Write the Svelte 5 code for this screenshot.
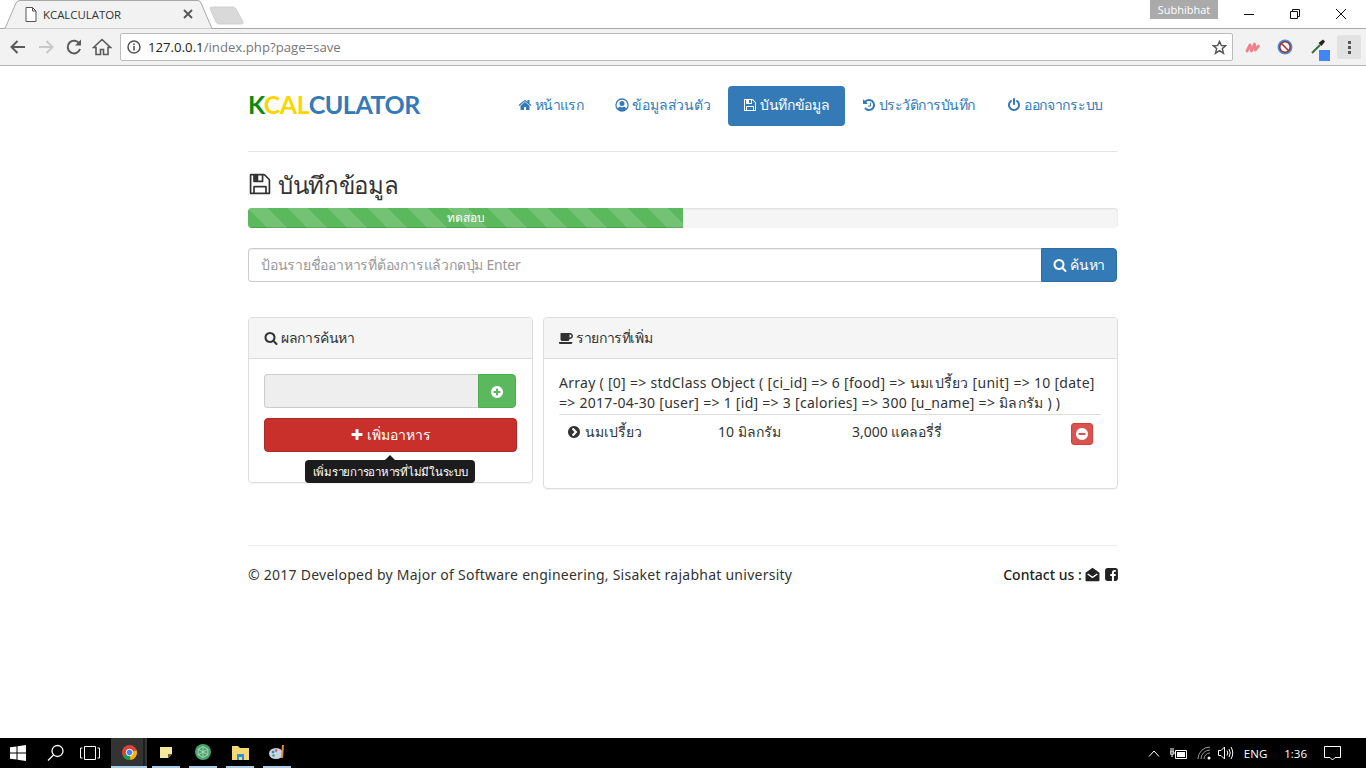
<script>
  const circle = "q0 209-103 385.500t-279.500 279.500-385.500 103-385.500-103-279.500-279.500-103-385.500 103-385.500 279.500-279.500 385.500-103 385.500 103 279.500 279.500 103 385.500z";
  const paths = {
    home: "M1472 992v480q0 26-19 45t-45 19h-384v-384h-256v384h-384q-26 0-45-19t-19-45v-480q0-1 .5-3t.5-3l575-474 575 474q1 2 1 6zm223-69l-62 74q-8 9-21 11h-3q-13 0-21-7l-692-577-692 577q-12 8-24 7-13-2-21-11l-62-74q-8-10-7-23.500t11-21.500l719-599q32-26 76-26t76 26l244 204v-195q0-14 9-23t23-9h192q14 0 23 9t9 23v408l219 182q10 8 11 21.500t-7 23.500z",
    search: "M1216 832q0-185-131.500-316.500t-316.500-131.500-316.500 131.500-131.500 316.500 131.500 316.500 316.500 131.500 316.500-131.500 131.500-316.500zm512 832q0 52-38 90t-90 38q-54 0-90-38l-343-342q-179 124-399 124-143 0-273.500-55.500t-225-150-150-225-55.500-273.500 55.500-273.500 150-225 225-150 273.500-55.500 273.500 55.500 225 150 150 225 55.500 273.500q0 220-124 399l343 343q37 37 37 90z",
    plus: "M1600 736v192q0 40-28 68t-68 28h-416v416q0 40-28 68t-68 28h-192q-40 0-68-28t-28-68v-416h-416q-40 0-68-28t-28-68v-192q0-40 28-68t68-28h416v-416q0-40 28-68t68-28h192q40 0 68 28t28 68v416h416q40 0 68 28t28 68z",
    power: "M1664 896q0 156-61 298t-164 245-245 164-298 61-298-61-245-164-164-245-61-298q0-182 80.500-343t226.500-270q43-32 95.500-25t83.500 50q32 42 24.500 94.500t-49.500 84.500q-98 74-151.500 181t-53.500 228q0 104 40.500 198.500t109.500 163.500 163.500 109.500 198.500 40.500 198.500-40.500 163.500-109.500 109.500-163.500 40.500-198.500q0-121-53.500-228t-151.500-181q-42-32-49.500-84.500t24.500-94.500q31-43 84-50t95 25q146 109 226.500 270t80.500 343zm-640-768v640q0 52-38 90t-90 38-90-38-38-90v-640q0-52 38-90t90-38 90 38 38 90z",
    save: "M512 1536h768v-384h-768v384zm896 0h128v-896q0-14-10-38.500t-20-34.500l-281-281q-10-10-34-20t-39-10v416q0 40-28 68t-68 28h-576q-40 0-68-28t-28-68v-416h-128v1280h128v-416q0-40 28-68t68-28h832q40 0 68 28t28 68v416zm-384-928v-320q0-13-9.500-22.500t-22.500-9.500h-192q-13 0-22.500 9.500t-9.500 22.500v320q0 13 9.500 22.500t22.500 9.500h192q13 0 22.500-9.500t9.500-22.500zm640 32v928q0 40-28 68t-68 28h-1344q-40 0-68-28t-28-68v-1344q0-40 28-68t68-28h928q40 0 88 20t76 48l280 280q28 28 48 76t20 88z",
    history: "M1664 896q0 156-61 298t-164 245-245 164-298 61q-172 0-327-72.500t-264-204.500q-7-10-6.500-22.500t8.500-20.500l137-138q10-9 25-9 16 2 23 12 73 95 179 147t225 52q104 0 198.500-40.500t163.500-109.500 109.500-163.500 40.500-198.500-40.500-198.500-109.500-163.500-163.500-109.500-198.500-40.500q-98 0-188 35.500t-160 101.500l137 138q31 30 14 69-17 40-59 40h-448q-26 0-45-19t-19-45v-448q0-42 40-59 39-17 69 14l130 129q107-101 244.500-156.500t284.500-55.500q156 0 298 61t245 164 164 245 61 298zm-512-288v448q0 14-9 23t-23 9h-320q-14 0-23-9t-9-23v-64q0-14 9-23t23-9h224v-352q0-14 9-23t23-9h64q14 0 23 9t9 23z",
    pluscircle: "M1344 960v-128q0-26-19-45t-45-19h-256v-256q0-26-19-45t-45-19h-128q-26 0-45 19t-19 45v256h-256q-26 0-45 19t-19 45v128q0 26 19 45t45 19h256v256q0 26 19 45t45 19h128q26 0 45-19t19-45v-256h256q26 0 45-19t19-45zM1664 896" + circle,
    minuscircle: "M1344 960v-128q0-26-19-45t-45-19h-768q-26 0-45 19t-19 45v128q0 26 19 45t45 19h768q26 0 45-19t19-45zM1664 896" + circle,
    chevron: "M845 1395l454-454q19-19 19-45t-19-45l-454-454q-19-19-45-19t-45 19l-102 102q-19 19-19 45t19 45l307 307-307 307q-19 19-19 45t19 45l102 102q19 19 45 19t45-19zM1664 896" + circle,
    coffee: "M1600 640q0-80-56-136t-136-56h-64v384h64q80 0 136-56t56-136zm-1664 768h1792q0 106-75 181t-181 75h-1280q-106 0-181-75t-75-181zm1856-768q0 159-112.500 271.500t-271.500 112.500h-64v32q0 92-66 158t-158 66h-704q-92 0-158-66t-66-158v-736q0-26 19-45t45-19h1152q159 0 271.500 112.500t112.500 271.500z",
    facebook: "M1376 128q119 0 203.500 84.500t84.500 203.500v960q0 119-84.500 203.500t-203.500 84.500h-188v-595h199l30-232h-229v-148q0-56 23.500-84t91.500-28l122-1v-207q-63-9-178-9-136 0-217.500 80t-81.500 226v171h-200v232h200v595h-532q-119 0-203.500-84.500t-84.500-203.500v-960q0-119 84.500-203.500t203.500-84.500h960z",
    user: "M896 40a856 856 0 1 0 0 1712 856 856 0 0 0 0-1712zm0 170a686 686 0 0 1 530 1122c-70-150-190-220-300-220-70 45-145 70-230 70s-160-25-230-70c-110 0-230 70-300 220a686 686 0 0 1 530-1122zm0 160a320 320 0 1 0 0 640 320 320 0 0 0 0-640z",
    envelope: "M896 96L64 700v900q0 96 96 96h1472q96 0 96-96V700zM896 1130L370 770l-100 140 626 430 626-430-100-140z",
  };

  const nav = [
    { icon: "home", label: "หน้าแรก", spacing: -0.7 },
    { icon: "user", label: "ข้อมูลส่วนตัว", spacing: -0.2 },
    { icon: "save", label: "บันทึกข้อมูล", spacing: -0.3, active: true },
    { icon: "history", label: "ประวัติการบันทึก", spacing: -0.5 },
    { icon: "power", label: "ออกจากระบบ", spacing: -0.3 },
  ];
</script>

{#snippet fa(name, size)}
  <svg class="fa" width={size} height={size} viewBox="0 0 1792 1792" aria-hidden="true"><path fill="currentColor" fill-rule="evenodd" d={paths[name]} /></svg>
{/snippet}

<div class="screen">
  <div class="tabstrip">
    <svg class="tabshape" width="250" height="29" viewBox="0 0 250 29">
      <path d="M0 28.500H5L16 3Q17 .5 20 .5H198Q200 .5 201 3L212 28.500" fill="#f2f2f2" stroke="#a8a8a8" />
      <path d="M210 8.500Q210 7 212 7H233Q235 7 236 9L243 22Q243.500 24 241 24H219Q217 24 216 22Z" fill="#d9d9d9" stroke="#cfcfcf" />
    </svg>
    <div class="tab">
      <svg width="12" height="15" viewBox="0 0 12 15"><path d="M1 .5H7.500L11 4V14.500H1ZM7.500 .5V4H11" fill="#fff" stroke="#555" /></svg>
      <span class="tabtitle">KCALCULATOR</span>
      <svg class="tabx" width="10" height="10" viewBox="0 0 10 10"><path d="M1 1L9 9M9 1L1 9" stroke="#555" stroke-width="1.800" /></svg>
    </div>
    <span class="profile">Subhibhat</span>
    <div class="winbtns">
      <svg width="12" height="12" viewBox="0 0 12 12"><path d="M1 6.500H11" stroke="#111" /></svg>
      <svg width="12" height="12" viewBox="0 0 12 12"><path d="M1.500 3.500H8.500V10.500H1.500ZM3.500 3.500V1.500H10.500V8.500H8.500" fill="none" stroke="#111" /></svg>
      <svg width="12" height="12" viewBox="0 0 12 12"><path d="M1 1L11 11M11 1L1 11" stroke="#111" /></svg>
    </div>
  </div>

  <div class="toolbar">
    <svg class="tb" width="20" height="20" viewBox="0 0 20 20"><path d="M17 10H4M9.500 4L3.500 10L9.500 16" fill="none" stroke="#5a5a5a" stroke-width="2" /></svg>
    <svg class="tb" width="20" height="20" viewBox="0 0 20 20"><path d="M3 10H16M10.500 4L16.500 10L10.500 16" fill="none" stroke="#c8c8c8" stroke-width="2" /></svg>
    <svg class="tb" width="20" height="20" viewBox="0 0 20 20"><path d="M15.500 7A6.300 6.300 0 1 0 16 12" fill="none" stroke="#5a5a5a" stroke-width="2" /><path d="M17 2.500V8.500H11Z" fill="#5a5a5a" /></svg>
    <svg class="tb" width="20" height="20" viewBox="0 0 20 20"><path d="M1.500 10.500L10 2.500L18.500 10.500H16V17.500H11.500V12.500H8.500V17.500H4V10.500Z" fill="none" stroke="#5a5a5a" stroke-width="1.600" /></svg>
    <div class="omnibox">
      <svg width="14" height="14" viewBox="0 0 14 14"><circle cx="7" cy="7" r="6" fill="none" stroke="#555" stroke-width="1.500" /><path d="M7 6V10.500M7 3.500V5" stroke="#555" stroke-width="1.600" /></svg>
      <span class="url"><b>127.0.0.1</b>/index.php?page=save</span>
      <svg class="star" width="15" height="15" viewBox="0 0 16 16"><path d="M8 1.500L10 6H14.800L11 9.200L12.300 14.200L8 11.400L3.700 14.200L5 9.200L1.200 6H6Z" fill="none" stroke="#555" stroke-width="1.500" /></svg>
    </div>
    <div class="exts">
      <svg width="16" height="16" viewBox="0 0 16 16"><path d="M2 12L5 6L6.500 12L9.500 5L10.500 11L13.500 7" fill="none" stroke="#f0808a" stroke-width="2.800" stroke-linecap="round" stroke-linejoin="round" /></svg>
      <svg width="16" height="16" viewBox="0 0 16 16"><circle cx="8" cy="8" r="7.500" fill="#4a90d9" /><circle cx="8" cy="8" r="5.200" fill="#fff" stroke="#9c2b2b" stroke-width="1.500" /><path d="M4.500 4.500L11.500 11.500" stroke="#9c2b2b" stroke-width="1.500" /></svg>
      <svg class="dropper" width="20" height="24" viewBox="0 0 20 24"><path d="M1 16L9 8" stroke="#3c6b3c" stroke-width="2" /><path d="M7.500 6L12 2.500L14 4.500L10.500 9Z" fill="#222" /><rect x="8" y="13" width="11" height="11" fill="#4285f4" /></svg>
      <div class="menu"><i></i><i></i><i></i></div>
    </div>
  </div>

  <main class="page">
    <div class="wrap">
      <header class="head">
        <div class="logo"><span class="k">K</span><span class="cal">CAL</span>CULATOR</div>
        <nav class="nav">
          {#each nav as item}
            <a class="pill" class:active={item.active} href="#top" style="letter-spacing: {item.spacing}px">{@render fa(item.icon, 14)} {item.label}</a>
          {/each}
        </nav>
      </header>

      <h3 class="title">{@render fa("save", 24)} บันทึกข้อมูล</h3>

      <div class="progress"><div class="bar" style="width: 50%">ทดสอบ</div></div>

      <div class="searchgroup">
        <input class="search" placeholder="ป้อนรายชื่ออาหารที่ต้องการแล้วกดปุ่ม Enter" />
        <button class="btn primary">{@render fa("search", 14)} ค้นหา</button>
      </div>

      <div class="panels">
        <section class="panel left">
          <div class="panel-head">{@render fa("search", 14)} ผลการค้นหา</div>
          <div class="panel-body">
            <div class="addgroup">
              <div class="readonly"></div>
              <button class="btn success">{@render fa("pluscircle", 14)}</button>
            </div>
            <button class="btn danger">{@render fa("plus", 14)} เพิ่มอาหาร</button>
            <div class="tooltip">เพิ่มรายการอาหารที่ไม่มีในระบบ</div>
          </div>
        </section>

        <section class="panel right">
          <div class="panel-head">{@render fa("coffee", 14)} รายการที่เพิ่ม</div>
          <div class="panel-body">
            <div class="dump">Array ( [0] =&gt; stdClass Object ( [ci_id] =&gt; 6 [food] =&gt; นมเปรี้ยว [unit] =&gt; 10 [date] =&gt; 2017-04-30 [user] =&gt; 1 [id] =&gt; 3 [calories] =&gt; 300 [u_name] =&gt; มิลกรัม ) )</div>
            <div class="row">
              <span class="c1">{@render fa("chevron", 14)} นมเปรี้ยว</span>
              <span class="c2">10 มิลกรัม</span>
              <span class="c3">3,000 แคลอรี่รี่</span>
              <button class="btn remove">{@render fa("minuscircle", 14)}</button>
            </div>
          </div>
        </section>
      </div>

      <footer class="foot">
        <span>© 2017 Developed by Major of Software engineering, Sisaket rajabhat university</span>
        <span class="contact">Contact us : {@render fa("envelope", 15)} {@render fa("facebook", 15)}</span>
      </footer>
    </div>
  </main>

  <div class="taskbar">
    <svg class="start" width="16" height="16" viewBox="0 0 16 16"><path d="M0 2.300L6.500 1.400V7.500H0ZM7.500 1.200L16 0V7.500H7.500ZM0 8.500H6.500V14.600L0 13.700ZM7.500 8.500H16V16L7.500 14.800Z" fill="#fff" /></svg>
    <svg class="cortana" width="18" height="18" viewBox="0 0 18 18"><circle cx="10.500" cy="7" r="5.500" fill="none" stroke="#fff" stroke-width="1.300" /><path d="M6.500 11L1 16.500" stroke="#fff" stroke-width="1.300" /></svg>
    <svg class="taskview" width="20" height="14" viewBox="0 0 20 14"><path d="M4.500 .5H15.500V13.500H4.500ZM2.500 2H.5V12H2.500M17.500 2H19.500V12H17.500" fill="none" stroke="#fff" /></svg>
    <div class="app running">
      <svg width="15" height="15" viewBox="0 0 16 16"><circle cx="8" cy="8" r="8" fill="#db4437" /><path d="M8 8L1 12A8 8 0 0 0 9 16Z" fill="#0f9d58" /><path d="M8 8L15.500 5.500A8 8 0 0 1 9 16Z" fill="#f4b400" /><circle cx="8" cy="8" r="3.500" fill="#4285f4" stroke="#fff" /></svg>
    </div>
    <div class="app">
      <svg width="13" height="13" viewBox="0 0 13 13"><path d="M0 1H12V8L8 12H0Z" fill="#f2e8a0" /><path d="M12 8H8V12Z" fill="#6b5f3a" /></svg>
    </div>
    <div class="app">
      <svg width="16" height="16" viewBox="0 0 16 16"><circle cx="8" cy="8" r="8" fill="#4ba36d" /><path d="M8 2.500L12.800 5.200V10.800L8 13.500L3.200 10.800V5.200ZM3.200 5.200L12.800 10.800M12.800 5.200L3.200 10.800M8 2.500V13.500" fill="none" stroke="#b8e0c4" stroke-width=".8" /></svg>
    </div>
    <div class="app">
      <svg width="17" height="15" viewBox="0 0 17 15"><path d="M0 1H6L8 3H17V15H0Z" fill="#f3d775" /><path d="M5 9H12V15H10V12H7V15H5Z" fill="#2f8fd6" /></svg>
    </div>
    <div class="app">
      <svg width="17" height="16" viewBox="0 0 17 16"><ellipse cx="7" cy="9.500" rx="7" ry="5.500" fill="#c6d7e3" /><circle cx="4" cy="8" r="1.300" fill="#2f7fd6" /><circle cx="7" cy="6.500" r="1.300" fill="#d9534f" /><circle cx="4.500" cy="11.500" r="1.300" fill="#4ba36d" /><path d="M14 1L13 14" stroke="#e98a2b" stroke-width="2" /></svg>
    </div>
    <div class="tray">
      <svg width="12" height="7" viewBox="0 0 12 7"><path d="M1 6.500L6 1L11 6.500" fill="none" stroke="#fff" /></svg>
      <svg class="battery" width="17" height="11" viewBox="0 0 17 11"><path d="M5.500 2.500H16.500V10.500H5.500Z" fill="none" stroke="#fff" /><rect x="7" y="4" width="8" height="5" fill="#fff" /><path d="M1 0V4M3 0V4M0 4H4V6H0ZM2 6V9" stroke="#fff" /></svg>
      <svg class="wifi" width="15" height="14" viewBox="0 0 15 14"><path d="M1 13A12 12 0 0 1 13 1M4 13A9 9 0 0 1 13 4M7 13A6 6 0 0 1 13 7" fill="none" stroke="#999" /><circle cx="12" cy="12" r="1.500" fill="#fff" /></svg>
      <svg class="speaker" width="16" height="14" viewBox="0 0 16 14"><path d="M.5 4.500H3L6.500 1V13L3 9.500H.5ZM9 4.500Q10.500 7 9 9.500M11 3Q13.500 7 11 11M13 1Q16.500 7 13 13" fill="none" stroke="#fff" /></svg>
      <span class="lang">ENG</span>
      <span class="clock">1:36</span>
      <svg class="notify" width="17" height="15" viewBox="0 0 17 15"><path d="M.5 .5H16.500V11.500H11L8.500 14L6 11.500H.5Z" fill="none" stroke="#fff" /></svg>
    </div>
  </div>
</div>

<style>
  :global(body) {
    background: #fff;
    overflow: hidden;
  }
  .screen {
    display: flex;
    flex-direction: column;
    height: 768px;
    width: 1366px;
    font-family: "Noto Sans", "Lato", sans-serif;
    font-size: 14px;
    color: #333;
  }
  .fa {
    vertical-align: -2px;
  }

  /* chrome */
  .tabstrip {
    position: relative;
    display: flex;
    align-items: flex-start;
    height: 29px;
    border-bottom: 1px solid #a8a8a8;
    box-sizing: border-box;
  }
  .tabshape {
    position: absolute;
    left: 0;
    top: 0;
  }
  .tab {
    position: relative;
    display: flex;
    align-items: center;
    width: 168px;
    height: 28px;
    margin-left: 25px;
    gap: 6px;
  }
  .tabtitle {
    font-family: "Open Sans", sans-serif;
    font-size: 11.400px;
    color: #333;
    flex: 1;
  }
  .profile {
    margin-left: auto;
    width: 68px;
    height: 19px;
    line-height: 19px;
    background: #aaa;
    color: #fff;
    font-family: "Open Sans", sans-serif;
    font-size: 11px;
    text-align: center;
  }
  .winbtns {
    display: flex;
    align-items: center;
    height: 27px;
    gap: 34px;
    margin: 0 19px 0 25px;
  }
  .toolbar {
    display: flex;
    align-items: center;
    height: 37px;
    box-sizing: border-box;
    background: #f2f2f2;
    border-bottom: 1px solid #b4b4b4;
    padding-left: 8px;
  }
  .tb {
    margin-right: 8px;
  }
  .omnibox {
    display: flex;
    align-items: center;
    gap: 7px;
    width: 1113px;
    height: 28px;
    box-sizing: border-box;
    padding: 0 5px 0 6px;
    background: #fff;
    border: 1px solid #bbb;
    border-radius: 2px;
  }
  .url {
    flex: 1;
    font-family: "Open Sans", sans-serif;
    font-size: 13.200px;
    color: #777;
  }
  .url b {
    font-weight: 400;
    color: #222;
  }
  .exts {
    display: flex;
    align-items: center;
    gap: 16px;
    margin-left: 12px;
  }
  .dropper {
    margin: 4px 0 0 2px;
  }
  .menu {
    display: flex;
    flex-direction: column;
    align-items: center;
    justify-content: center;
    gap: 2px;
    width: 24px;
    height: 24px;
    margin-left: -10px;
    background: #e2e2e2;
    border-radius: 2px;
  }
  .menu i {
    width: 3px;
    height: 3px;
    background: #555;
  }

  /* page */
  .page {
    flex: 1;
  }
  .wrap {
    width: 870px;
    margin: 0 auto;
  }
  .head {
    display: flex;
    align-items: center;
    justify-content: space-between;
    height: 65px;
    padding-top: 20px;
    border-bottom: 1px solid #e5e5e5;
  }
  .logo {
    font-family: "Lato", sans-serif;
    font-size: 25px;
    font-weight: 700;
    color: #337ab7;
    letter-spacing: -.45px;
    margin-bottom: 29px;
  }
  .k {
    color: #0a8a0a;
  }
  .cal {
    color: #ffd500;
  }
  .nav {
    display: flex;
    gap: 2px;
    margin-bottom: 25px;
  }
  .pill {
    display: block;
    height: 40px;
    line-height: 38px;
    padding: 0 15px;
    border-radius: 4px;
    color: #337ab7;
    text-decoration: none;
    white-space: nowrap;
  }
  .pill.active {
    background: #337ab7;
    color: #fff;
  }
  .title {
    margin: 18px 0 9px;
    font-size: 24px;
    font-weight: 400;
    line-height: 29px;
    color: #333;
    letter-spacing: -.3px;
  }
  .progress {
    height: 20px;
    background: #f5f5f5;
    border-radius: 4px;
    overflow: hidden;
    box-shadow: inset 0 1px 2px rgba(0, 0, 0, .1);
  }
  .bar {
    height: 20px;
    line-height: 20px;
    background-color: #5cb85c;
    background-image: linear-gradient(45deg, rgba(255, 255, 255, .15) 25%, transparent 25%, transparent 50%, rgba(255, 255, 255, .15) 50%, rgba(255, 255, 255, .15) 75%, transparent 75%, transparent);
    background-size: 40px 40px;
    box-shadow: inset 0 -1px 0 rgba(0, 0, 0, .15);
    color: #fff;
    font-size: 12px;
    font-weight: 500;
    text-align: center;
  }
  .searchgroup {
    display: flex;
    margin: 20px 1px 0 0;
  }
  .search {
    flex: 1;
    height: 34px;
    box-sizing: border-box;
    padding: 5px 12px 7px;
    border: 1px solid #ccc;
    border-right: 0;
    border-radius: 4px 0 0 4px;
    font: inherit;
    letter-spacing: -.22px;
    outline: none;
    box-shadow: inset 0 1px 1px rgba(0, 0, 0, .075);
  }
  .search::placeholder {
    color: #999;
  }
  .btn {
    height: 34px;
    border: 1px solid transparent;
    border-radius: 4px;
    color: #fff;
    font: inherit;
    padding: 0;
  }
  .primary {
    width: 76px;
    background: #337ab7;
    border-color: #2e6da4;
    border-radius: 0 4px 4px 0;
    letter-spacing: -.3px;
  }
  .panels {
    display: grid;
    grid-template-columns: 285px 575px;
    gap: 10px;
    align-items: start;
    margin-top: 35px;
  }
  .panel {
    border: 1px solid #ddd;
    border-radius: 4px;
    box-shadow: 0 1px 1px rgba(0, 0, 0, .05);
  }
  .panel-head {
    height: 40px;
    line-height: 40px;
    padding: 0 15px;
    background: #f5f5f5;
    border-bottom: 1px solid #ddd;
    border-radius: 3px 3px 0 0;
    font-weight: 500;
    letter-spacing: -.4px;
  }
  .panel-body {
    padding: 15px;
  }
  .left .panel-body {
    position: relative;
    height: 93px;
  }
  .addgroup {
    display: flex;
    margin-right: 1px;
  }
  .readonly {
    flex: 1;
    height: 34px;
    box-sizing: border-box;
    background: #eee;
    border: 1px solid #ccc;
    border-right: 0;
    border-radius: 4px 0 0 4px;
  }
  .success {
    width: 38px;
    background: #5cb85c;
    border-color: #4cae4c;
    border-radius: 0 4px 4px 0;
  }
  .danger {
    display: block;
    width: 253px;
    margin-top: 10px;
    background: #c9302c;
    border-color: #ac2925;
  }
  .tooltip {
    position: absolute;
    left: 56px;
    top: 101px;
    width: 170px;
    height: 23px;
    line-height: 23px;
    background: #1c1c1c;
    border-radius: 4px;
    color: #fff;
    font-size: 11.500px;
    letter-spacing: -.25px;
    text-align: center;
    white-space: nowrap;
  }
  .tooltip::before {
    content: "";
    position: absolute;
    left: 80px;
    top: -5px;
    border: solid transparent;
    border-width: 0 5px 5px;
    border-bottom-color: #1c1c1c;
  }
  .right .panel-body {
    padding: 14px 16px 38px 15px;
  }
  .dump {
    line-height: 20px;
    padding-bottom: 1px;
    border-bottom: 1px solid #ddd;
    letter-spacing: .28px;
  }
  .row {
    display: grid;
    grid-template-columns: 151px 134px 1fr 22px;
    align-items: start;
    padding: 7px 8px 0;
    height: 28px;
    line-height: 20px;
  }
  .remove {
    width: 22px;
    height: 22px;
    margin-top: 1px;
    background: #d9534f;
    border-color: #d43f3a;
    border-radius: 3px;
  }
  .foot {
    display: flex;
    justify-content: space-between;
    margin-top: 56px;
    padding-top: 19px;
    border-top: 1px solid #eee;
    line-height: 20px;
    letter-spacing: .25px;
  }
  .contact {
    margin-right: -1px;
    color: #222;
    font-weight: 500;
    letter-spacing: 0;
  }

  /* taskbar */
  .taskbar {
    display: flex;
    align-items: center;
    height: 30px;
    background: #000;
  }
  .start {
    margin-left: 10px;
  }
  .cortana {
    margin-left: 21px;
  }
  .taskview {
    margin-left: 15px;
  }
  .app {
    display: flex;
    align-items: center;
    justify-content: center;
    box-sizing: border-box;
    width: 28px;
    height: 30px;
    margin-right: 9px;
    border-bottom: 2px solid #a8cde8;
    color: #fff;
  }
  .app.running {
    width: 36px;
    margin-left: 11px;
    margin-right: 5px;
    background: linear-gradient(90deg, #333 32px, #1f1f1f 32px, #1f1f1f 34px, #333 34px);
  }
  .tray {
    display: flex;
    align-items: center;
    margin-left: auto;
    color: #fff;
    font-family: "Open Sans", sans-serif;
    font-size: 11.500px;
  }
  .battery {
    margin-left: 10px;
  }
  .wifi {
    margin-left: 10px;
  }
  .speaker {
    margin-left: 6px;
  }
  .lang {
    margin-left: 10px;
  }
  .clock {
    margin-left: 17px;
  }
  .notify {
    margin: 0 25px 0 17px;
  }
</style>
